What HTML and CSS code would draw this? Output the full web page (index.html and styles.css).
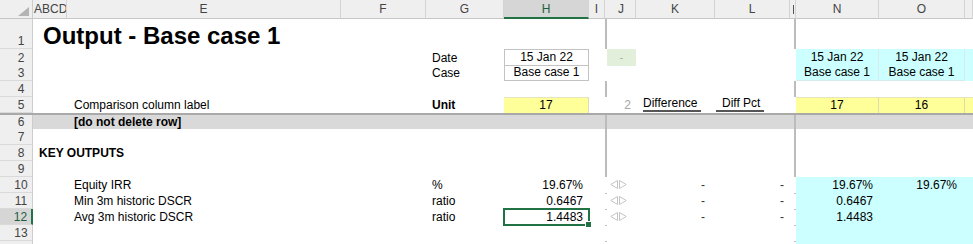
FILE: index.html
```html
<!DOCTYPE html>
<html lang="en">
<head>
    <meta charset="UTF-8">
    <title>Output - Base case 1</title>
    <link rel="stylesheet" href="styles.css">
</head>
<body>
    <div class="sheet">
        <div class="row hdr">
            <div class="rh corner">
                <svg width="12" height="9" viewBox="0 0 12 9"><polygon points="0,9 11,0 11,9" fill="#b4b4b4"/></svg>
            </div>
            <div class="ch c-ad left">ABCD</div>
            <div class="ch c-e">E</div>
            <div class="ch c-f">F</div>
            <div class="ch c-g">G</div>
            <div class="ch c-h sel">H</div>
            <div class="ch c-i">I</div>
            <div class="ch c-fz1"></div>
            <div class="ch c-j">J</div>
            <div class="ch c-k">K</div>
            <div class="ch c-l">L</div>
            <div class="ch c-mm"><span class="stub"></span></div>
            <div class="ch c-n">N</div>
            <div class="ch c-o">O</div>
            <div class="ch c-p"></div>
        </div>

        <div class="row tall">
            <div class="rh">1</div>
            <div class="cell title">Output - Base case 1</div>
            <div class="fz c-fz1"></div><div class="fz c-fz2"></div>
        </div>

        <div class="row">
            <div class="rh">2</div>
            <div class="cell c-g">Date</div>
            <div class="cell c-h center box top">15 Jan 22</div>
            <div class="cell c-j center green">-</div>
            <div class="cell c-n center cy bx">15 Jan 22</div>
            <div class="cell c-o center cy bx">15 Jan 22</div>
            <div class="cell c-p cy"></div>
            <div class="fz c-fz1"></div><div class="fz c-fz2"></div>
        </div>

        <div class="row">
            <div class="rh">3</div>
            <div class="cell c-g">Case</div>
            <div class="cell c-h center box">Base case 1</div>
            <div class="cell c-n center cy bx">Base case 1</div>
            <div class="cell c-o center cy bx">Base case 1</div>
            <div class="cell c-p cy"></div>
            <div class="fz c-fz1"></div><div class="fz c-fz2"></div>
        </div>

        <div class="row">
            <div class="rh">4</div>
            <div class="fz c-fz1"></div><div class="fz c-fz2"></div>
        </div>

        <div class="row">
            <div class="rh">5</div>
            <div class="cell c-e indent">Comparison column label</div>
            <div class="cell c-g bold">Unit</div>
            <div class="cell c-h center yel">17</div>
            <div class="cell c-j right muted">2</div>
            <div class="cell c-k"><span class="ul ul-a">Difference</span></div>
            <div class="cell c-l"><span class="ul ul-b">Diff Pct</span></div>
            <div class="cell c-n center yel">17</div>
            <div class="cell c-o center yel">16</div>
            <div class="cell c-p yel"></div>
            <div class="fz c-fz1"></div><div class="fz c-fz2"></div>
        </div>

        <div class="row band">
            <div class="rh">6</div>
            <div class="cell c-e indent bold">[do not delete row]</div>
            <div class="fz c-fz1"></div><div class="fz c-fz2"></div>
        </div>

        <div class="row">
            <div class="rh">7</div>
            <div class="fz c-fz1"></div><div class="fz c-fz2"></div>
        </div>

        <div class="row">
            <div class="rh">8</div>
            <div class="cell section bold">KEY OUTPUTS</div>
            <div class="fz c-fz1"></div><div class="fz c-fz2"></div>
        </div>

        <div class="row">
            <div class="rh">9</div>
            <div class="fz c-fz1"></div><div class="fz c-fz2"></div>
        </div>

        <div class="row">
            <div class="rh">10</div>
            <div class="cell c-e indent">Equity IRR</div>
            <div class="cell c-g">%</div>
            <div class="cell c-h right">19.67%</div>
            <div class="cell c-j arrows"><svg width="18" height="9" viewBox="0 0 18 9"><polygon points="7.5,0.5 7.5,8.5 0.8,4.5" fill="none" stroke="#c4c4c4"/><polygon points="9.5,0.5 9.5,8.5 16.2,4.5" fill="none" stroke="#c4c4c4"/></svg></div>
            <div class="cell c-k right dash">-</div>
            <div class="cell c-l right dash-l">-</div>
            <div class="cell c-n right cy">19.67%</div>
            <div class="cell c-o right cy pad-o">19.67%</div>
            <div class="cell c-p cy"></div>
            <div class="fz c-fz1"></div><div class="fz c-fz2"></div>
        </div>

        <div class="row">
            <div class="rh">11</div>
            <div class="cell c-e indent">Min 3m historic DSCR</div>
            <div class="cell c-g">ratio</div>
            <div class="cell c-h right">0.6467</div>
            <div class="cell c-j arrows"><svg width="18" height="9" viewBox="0 0 18 9"><polygon points="7.5,0.5 7.5,8.5 0.8,4.5" fill="none" stroke="#c4c4c4"/><polygon points="9.5,0.5 9.5,8.5 16.2,4.5" fill="none" stroke="#c4c4c4"/></svg></div>
            <div class="cell c-k right dash">-</div>
            <div class="cell c-l right dash-l">-</div>
            <div class="cell c-n right cy">0.6467</div>
            <div class="cell c-o cy"></div>
            <div class="cell c-p cy"></div>
            <div class="fz c-fz1"></div><div class="fz c-fz2"></div>
        </div>

        <div class="row">
            <div class="rh rh-sel">12</div>
            <div class="cell c-e indent">Avg 3m historic DSCR</div>
            <div class="cell c-g">ratio</div>
            <div class="cell c-h right active">1.4483</div>
            <div class="cell c-j arrows"><svg width="18" height="9" viewBox="0 0 18 9"><polygon points="7.5,0.5 7.5,8.5 0.8,4.5" fill="none" stroke="#c4c4c4"/><polygon points="9.5,0.5 9.5,8.5 16.2,4.5" fill="none" stroke="#c4c4c4"/></svg></div>
            <div class="cell c-k right dash">-</div>
            <div class="cell c-l right dash-l">-</div>
            <div class="cell c-n right cy">1.4483</div>
            <div class="cell c-o cy"></div>
            <div class="cell c-p cy"></div>
            <div class="fz c-fz1"></div><div class="fz c-fz2"></div>
        </div>

        <div class="row">
            <div class="rh">13</div>
            <div class="cell c-n cy"></div>
            <div class="cell c-o cy"></div>
            <div class="cell c-p cy"></div>
            <div class="fz c-fz1"></div><div class="fz c-fz2"></div>
        </div>

        <div class="row">
            <div class="rh"></div>
            <div class="cell c-n cy"></div>
            <div class="cell c-o cy"></div>
            <div class="cell c-p cy"></div>
            <div class="fz c-fz1"></div><div class="fz c-fz2"></div>
        </div>
    </div>
</body>
</html>
```

FILE: styles.css
```css
body {
    margin: 0;
    background: #fff;
    font-family: "Liberation Sans", Arial, sans-serif;
    font-size: 12px;
    color: #000;
}

.sheet {
    width: 973px;
    height: 244px;
    overflow: hidden;
}

/* every row shares the same column track list */
.row {
    display: grid;
    grid-template-columns: 33px 34px 274px 85px 78px 85px 16px 2px 29px 79px 75px 4px 2px 83px 86px 1fr;
    height: 16px;
}

.row.tall {
    height: 30px;
}

.row.hdr {
    height: 19px;
}

.row.band {
    background: #d9d9d9;
    border-top: 2px solid #a9a9a9;
    box-sizing: border-box;
    height: 16px;
}

/* row + column headers */
.rh {
    grid-column: 1;
    background: #efefef;
    border-right: 1px solid #cdcdcd;
    border-bottom: 1px solid #dadada;
    box-sizing: border-box;
    color: #444;
    display: flex;
    align-items: flex-end;
    justify-content: center;
    padding: 0 0 0 10px;
    line-height: 14px;
}

.rh-sel {
    background: #d6d6d6;
    color: #1e5e3c;
    border-right: 2px solid #217346;
}

.corner {
    align-items: flex-end;
    justify-content: flex-end;
    padding: 0 2px 2px 0;
    border-bottom: 1px solid #c6c6c6;
}

.ch {
    background: #efefef;
    border-right: 1px solid #d4d4d4;
    border-bottom: 1px solid #c6c6c6;
    box-sizing: border-box;
    color: #444;
    display: flex;
    align-items: center;
    justify-content: center;
    overflow: hidden;
    white-space: nowrap;
}

.ch.left {
    justify-content: flex-start;
    padding-left: 1px;
}

.ch.sel {
    background: #d6d6d6;
    color: #1e5e3c;
    border-bottom: 2px solid #217346;
}

/* squeezed column M only shows a sliver of its letter */
.stub {
    width: 1px;
    height: 9px;
    background: #555;
    margin-left: 1px;
}

.c-ad { grid-column: 2; }
.c-e { grid-column: 3; }
.c-f { grid-column: 4; }
.c-g { grid-column: 5; }
.c-h { grid-column: 6; }
.c-i { grid-column: 7; }
.c-fz1 { grid-column: 8; }
.c-j { grid-column: 9; }
.c-k { grid-column: 10; }
.c-l { grid-column: 11; }
.c-m { grid-column: 12; }
.c-mm { grid-column: 12 / 14; }
.c-fz2 { grid-column: 13; }
.c-n { grid-column: 14; }
.c-o { grid-column: 15; }
.c-p { grid-column: 16; }

.hdr .c-fz1 {
    border-right: none;
}

.fz {
    background: #bcbcbc;
}

/* cells */
.cell {
    display: flex;
    align-items: flex-end;
    padding: 0 6px 1px;
    line-height: 14px;
    white-space: nowrap;
    box-sizing: border-box;
    min-width: 0;
}

.title {
    grid-column: 2 / 6;
    font-size: 24px;
    font-weight: bold;
    line-height: 26px;
    padding: 0 0 0 10px;
}

.section {
    grid-column: 2 / 4;
    padding-left: 6px;
}

.indent {
    padding-left: 7px;
}

.bold {
    font-weight: bold;
}

.center {
    justify-content: center;
}

.right {
    justify-content: flex-end;
}

.muted {
    color: #a6a6a6;
    padding-right: 5px;
}

.box {
    border: 1px solid #c3c3c3;
    border-top: none;
}

.box.top {
    border-top: 1px solid #c3c3c3;
}

.green {
    background: #e2efda;
    color: #a3b09f;
    font-size: 10px;
}

.cy {
    background: #ccffff;
}

.bx {
    border-right: 1px solid #d9eaea;
    border-bottom: 1px solid #d9eaea;
}

.yel {
    background: #ffff99;
    border-right: 1px solid #dcdcb0;
    border-top: 1px solid #e4e4c0;
}

.ul {
    border-bottom: 2px solid #555;
    line-height: 13px;
}

.ul-a {
    padding-right: 4px;
    margin-left: 1px;
}

.ul-b {
    padding: 0 4px 0 6px;
    margin-left: -5px;
}

.arrows {
    align-items: center;
    padding: 0 0 0 3px;
}

.dash {
    padding-right: 10px;
    color: #333;
}

.dash-l {
    padding-right: 6px;
    color: #333;
}

.pad-o {
    padding-right: 8px;
}

/* current cell with fill handle */
.active {
    position: relative;
}

.active::after {
    content: "";
    position: absolute;
    left: -1px;
    right: -1px;
    top: -1px;
    bottom: -1px;
    border: 2px solid #217346;
}

.active::before {
    content: "";
    position: absolute;
    right: -3px;
    bottom: -3px;
    width: 5px;
    height: 5px;
    background: #217346;
    border: 1px solid #fff;
    z-index: 1;
}
```
